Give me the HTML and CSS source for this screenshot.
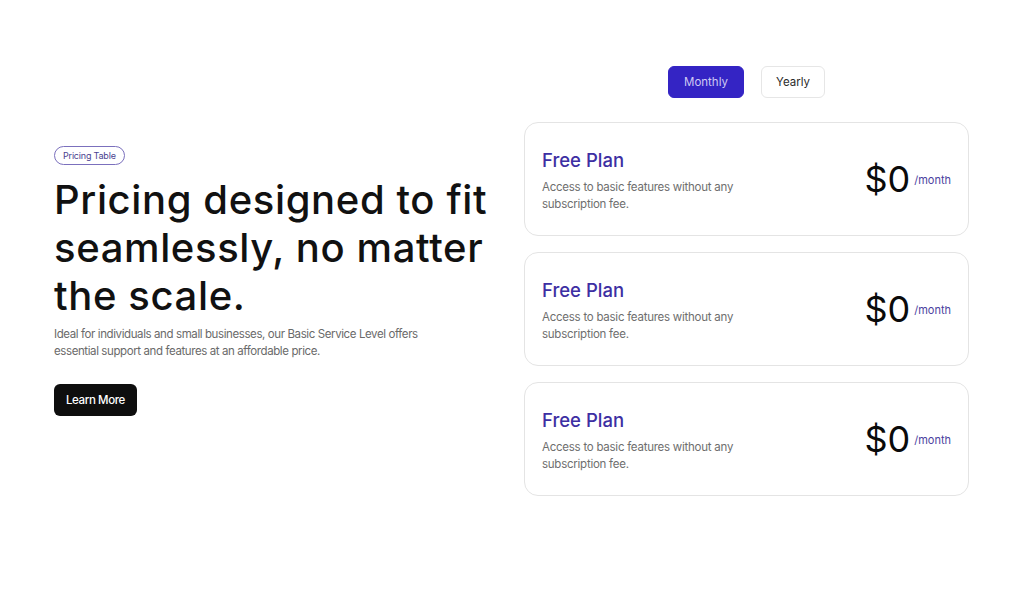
FILE: index.html
```html
<!DOCTYPE html>
<html lang="en">
<head>
<meta charset="utf-8">
<title>Pricing</title>
<link rel="stylesheet" href="styles.css">
</head>
<body>
<section class="pricing">
  <div class="intro">
    <span class="badge">Pricing Table</span>
    <h1 class="title">Pricing designed to fit seamlessly, no matter the scale.</h1>
    <p class="lead">Ideal for individuals and small businesses, our Basic Service Level offers essential support and features at an affordable price.</p>
    <button class="cta">Learn More</button>
  </div>
  <div class="plans">
    <div class="toggle">
      <button class="toggle-btn active">Monthly</button>
      <button class="toggle-btn">Yearly</button>
    </div>
    <div class="card">
      <div class="card-info">
        <h2 class="plan-name">Free Plan</h2>
        <p class="plan-desc">Access to basic features without any subscription fee.</p>
      </div>
      <div class="price"><span class="amount">$0</span><span class="period">/month</span></div>
    </div>
    <div class="card">
      <div class="card-info">
        <h2 class="plan-name">Free Plan</h2>
        <p class="plan-desc">Access to basic features without any subscription fee.</p>
      </div>
      <div class="price"><span class="amount">$0</span><span class="period">/month</span></div>
    </div>
    <div class="card">
      <div class="card-info">
        <h2 class="plan-name">Free Plan</h2>
        <p class="plan-desc">Access to basic features without any subscription fee.</p>
      </div>
      <div class="price"><span class="amount">$0</span><span class="period">/month</span></div>
    </div>
  </div>
</section>
</body>
</html>
```
FILE: styles.css
```css
* { box-sizing: border-box; }
html, body { margin: 0; padding: 0; background: #ffffff; }
body {
  font-family: Inter, "Noto Sans", sans-serif;
  color: #111111;
}
.pricing {
  display: flex;
  align-items: center;
  gap: 30px;
  padding: 66px 55px 0 54px;
}
.intro {
  width: 440px;
  flex: none;
  display: flex;
  flex-direction: column;
  align-items: flex-start;
}
.badge {
  display: inline-block;
  height: 19px;
  line-height: 17px;
  padding: 0 8px;
  border: 1px solid #7b70bd;
  border-radius: 999px;
  font-size: 9px;
  color: #4a3f8f;
  letter-spacing: -0.2px;
}
.title {
  margin: 11px 0 0;
  font-size: 40px;
  line-height: 48px;
  font-weight: 500;
  letter-spacing: 0.62px;
  color: #111111;
}
.lead {
  margin: 6px 0 0;
  max-width: 372px;
  font-size: 11.5px;
  line-height: 17px;
  letter-spacing: -0.4px;
  color: #6a6a6a;
}
.cta {
  margin-top: 24px;
  height: 32px;
  padding: 0 12px;
  background: #0e0e0e;
  color: #ffffff;
  border: none;
  border-radius: 6px;
  font-family: inherit;
  font-size: 11.5px;
  font-weight: 500;
  letter-spacing: -0.4px;
}
.plans {
  width: 445px;
  flex: none;
  display: flex;
  flex-direction: column;
  gap: 16px;
}
.toggle {
  display: flex;
  justify-content: center;
  gap: 17px;
  margin-bottom: 8px;
}
.toggle-btn {
  height: 32px;
  padding: 0 14px;
  border: 1px solid #e6e6e6;
  border-radius: 6px;
  background: #ffffff;
  color: #2b2b2b;
  font-family: inherit;
  font-size: 11.5px;
}
.toggle-btn.active {
  width: 76px;
  background: #3424c4;
  border-color: #3424c4;
  color: #cfcaf3;
}
.card {
  height: 114px;
  display: flex;
  align-items: center;
  justify-content: space-between;
  padding: 0 17px;
  border: 1px solid #e4e4e4;
  border-radius: 14px;
}
.card-info {
  padding-top: 2px;
}
.plan-name {
  margin: 0;
  font-size: 18.5px;
  line-height: 24px;
  font-weight: 500;
  color: #3d2fa3;
}
.plan-desc {
  margin: 7px 0 0;
  max-width: 196px;
  font-size: 11.5px;
  line-height: 17px;
  letter-spacing: -0.25px;
  color: #6e6e6e;
}
.price {
  display: flex;
  align-items: flex-start;
  gap: 4px;
}
.amount {
  font-size: 36px;
  line-height: 40px;
  font-weight: 400;
  color: #0a0a0a;
}
.period {
  margin-top: 14px;
  font-size: 11px;
  color: #4b3fa0;
}
```
